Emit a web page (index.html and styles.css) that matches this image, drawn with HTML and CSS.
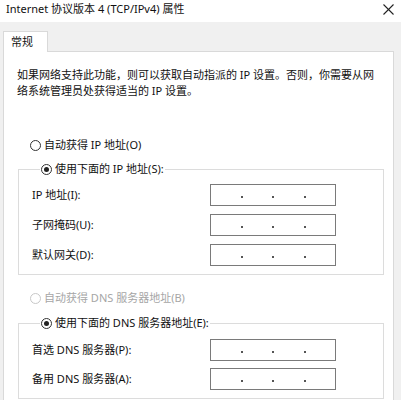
FILE: index.html
```html
<!DOCTYPE html>
<html lang="zh-CN">
  <head>
    <meta charset="UTF-8" />
    <meta name="viewport" content="width=device-width, initial-scale=1.0" />
    <title>Internet 协议版本 4 (TCP/IPv4) 属性</title>
    <link rel="stylesheet" href="styles.css">
  </head>
  <body>
    <div class="titlebar">
      <span class="title">Internet 协议版本 4 (TCP/IPv4) 属性</span>
      <svg class="close" width="11" height="11" viewBox="0 0 11 11" xmlns="http://www.w3.org/2000/svg">
        <line x1="0.5" y1="0.5" x2="10.5" y2="10.5" stroke="#222" stroke-width="1.1" />
        <line x1="10.5" y1="0.5" x2="0.5" y2="10.5" stroke="#222" stroke-width="1.1" />
      </svg>
    </div>
    <div class="tabs">
      <div class="tab">常规</div>
    </div>
    <div class="panel">
      <p class="intro">如果网络支持此功能，则可以获取自动指派的 IP 设置。否则，你需要从网<br>络系统管理员处获得适当的 IP 设置。</p>

      <div class="radio radio-auto-ip"><span class="dot"></span>自动获得 IP 地址(O)</div>
      <fieldset class="group">
        <legend class="radio"><span class="dot checked"></span>使用下面的 IP 地址(S):</legend>
        <div class="row"><span class="label">IP 地址(I):</span><div class="ip"><i></i><i></i><i></i></div></div>
        <div class="row"><span class="label">子网掩码(U):</span><div class="ip"><i></i><i></i><i></i></div></div>
        <div class="row"><span class="label">默认网关(D):</span><div class="ip"><i></i><i></i><i></i></div></div>
      </fieldset>

      <div class="radio radio-auto-dns disabled"><span class="dot"></span>自动获得 DNS 服务器地址(B)</div>
      <fieldset class="group group-dns">
        <legend class="radio"><span class="dot checked"></span>使用下面的 DNS 服务器地址(E):</legend>
        <div class="row"><span class="label">首选 DNS 服务器(P):</span><div class="ip"><i></i><i></i><i></i></div></div>
        <div class="row"><span class="label">备用 DNS 服务器(A):</span><div class="ip"><i></i><i></i><i></i></div></div>
      </fieldset>
    </div>
  </body>
</html>
```

FILE: styles.css
```css
* {
  margin: 0;
  padding: 0;
  box-sizing: border-box;
}
body {
  width: 401px;
  height: 400px;
  overflow: hidden;
  background-color: #f0f0f0;
  font-family: "Noto Sans", "Noto Sans CJK SC", sans-serif;
  font-size: 11px;
  color: #111;
}
.titlebar {
  height: 22px;
  background-color: #fff;
  display: flex;
  align-items: flex-start;
  padding: 1px 0 0 6px;
}
.title {
  line-height: 16px;
  flex: 1;
}
.close {
  display: block;
  flex: 0 0 11px;
  margin: 3px 7px 0 0;
}
.tabs {
  padding: 9px 0 0 3px;
  display: flex;
}
.tab {
  width: 45px;
  height: 21px;
  background-color: #fff;
  border: 1px solid #d9d9d9;
  border-bottom: none;
  margin-bottom: -1px;
  padding: 2px 0 0 7px;
  line-height: 16px;
  position: relative;
  z-index: 1;
}
.panel {
  margin-left: 3px;
  width: 391px;
  height: 349px;
  overflow: hidden;
  background-color: #fff;
  border: 1px solid #d9d9d9;
  border-bottom: none;
  padding: 15px 0 0 13px;
}
.intro {
  line-height: 16px;
  white-space: nowrap;
}
.radio {
  display: flex;
  align-items: center;
  height: 16px;
  line-height: 16px;
  white-space: nowrap;
}
.radio-auto-ip {
  margin: 38px 0 0 13px;
}
.radio-auto-dns {
  margin: 15px 0 0 13px;
}
.disabled {
  color: #a6a6a6;
}
.dot {
  width: 11px;
  height: 11px;
  border: 1px solid #333;
  border-radius: 50%;
  margin-right: 3px;
  display: flex;
  align-items: center;
  justify-content: center;
  flex-shrink: 0;
}
.disabled .dot {
  border-color: #c8c8c8;
}
.dot.checked::after {
  content: "";
  width: 5px;
  height: 5px;
  border-radius: 50%;
  background-color: #222;
}
.group {
  width: 366px;
  margin: 8px 0 0 1px;
  border: 1px solid #dcdcdc;
  padding: 7px 0 8px 13px;
  display: flex;
  flex-direction: column;
  gap: 8px;
}
.group legend {
  margin-left: 8px;
  padding: 0 1px;
}
.group-dns {
  margin-top: 9px;
  padding-top: 8px;
  gap: 7px;
}
.row {
  display: flex;
  align-items: center;
}
.label {
  width: 178px;
  line-height: 16px;
}
.ip {
  width: 126px;
  height: 22px;
  border: 1px solid #7a7a7a;
  display: flex;
  justify-content: space-evenly;
  align-items: center;
  padding-top: 3px;
}
.ip i {
  width: 2px;
  height: 2px;
  background-color: #555;
}
```
